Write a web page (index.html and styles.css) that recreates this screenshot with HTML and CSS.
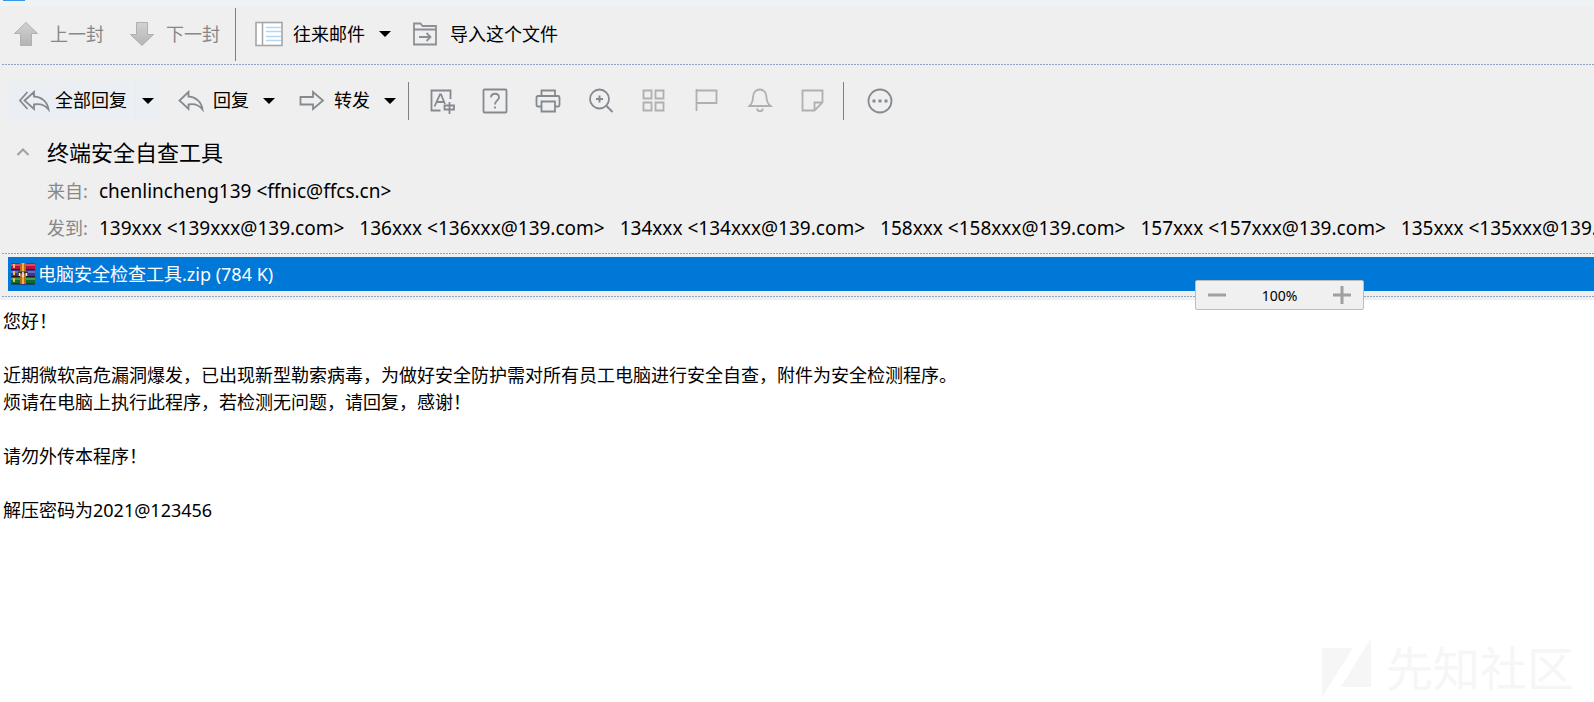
FILE: index.html
```html
<!DOCTYPE html>
<html lang="zh-CN">
<head>
  <meta charset="UTF-8" />
  <meta name="viewport" content="width=device-width, initial-scale=1.0"/>
  <title>终端安全自查工具</title>
  <link rel="stylesheet" href="styles.css">
</head>
<body>
  <div class="topbar"><span class="tab"></span></div>

  <header>
    <nav class="toolbar">
      <button class="btn prev" disabled>
        <svg width="26" height="26" viewBox="0 0 26 26"><defs><linearGradient id="g" x1="0" y1="0" x2="0" y2="1"><stop offset="0" stop-color="#d2d2d2"/><stop offset="1" stop-color="#b4b4b4"/></linearGradient></defs><path d="M13 1.500 24.500 12.500H18.500V24.500H7.500V12.500H1.500Z" fill="url(#g)" stroke="#b0b0b0"/></svg>
        <span>上一封</span>
      </button>
      <button class="btn next" disabled>
        <svg width="26" height="26" viewBox="0 0 26 26"><path d="M13 24.500 24.500 13.500H18.500V1.500H7.500V13.500H1.500Z" fill="url(#g)" stroke="#b0b0b0"/></svg>
        <span>下一封</span>
      </button>
      <span class="sep tall"></span>
      <button class="btn related">
        <svg width="28" height="26" viewBox="0 0 28 26"><rect x="1" y="1.500" width="26" height="23" fill="#fff" stroke="#a6a6a6" stroke-width="1.600"/><path d="M7.500 2V24" stroke="#a6a6a6" stroke-width="1.500"/><path d="M11 6.500H26M11 10.500H26M11 15.500H26M11 19.500H26" stroke="#b5d6ee" stroke-width="1.600"/></svg>
        <span>往来邮件</span>
        <i class="caret"></i>
      </button>
      <button class="btn import">
        <svg width="26" height="26" viewBox="0 0 26 26"><path d="M2 23.500V2.500H8.500L10.500 5H24V23.500ZM2 8.500H24M7 16H18M14.500 12 18.500 16 14.500 20" fill="none" stroke="#8c9095" stroke-width="1.800"/></svg>
        <span>导入这个文件</span>
      </button>
    </nav>

    <nav class="toolbar second">
      <div class="split hot">
        <button class="btn">
          <svg width="32" height="22" viewBox="0 0 32 22"><path d="M9.500 2 2 10.500 9.500 19M16 2 6.500 10.500 16 19V14.500C22 13.500 27 15 30.500 19.500 29.500 12 24 7 16 6.500Z" fill="none" stroke="#858a91" stroke-width="1.800"/></svg>
          <span>全部回复</span>
        </button>
        <button class="btn drop" aria-label="全部回复选项"><i class="caret"></i></button>
      </div>
      <div class="split">
        <button class="btn">
          <svg width="26" height="22" viewBox="0 0 26 22"><path d="M10.500 2 1.500 10.500 10.500 19V14.500C16 13.500 21 15 24.500 19.500 23.500 12 18 7 10.500 6.500Z" fill="none" stroke="#858a91" stroke-width="1.800"/></svg>
          <span>回复</span>
        </button>
        <button class="btn drop" aria-label="回复选项"><i class="caret"></i></button>
      </div>
      <div class="split">
        <button class="btn">
          <svg width="26" height="22" viewBox="0 0 26 22"><path d="M1.500 7H14V2L24 10.500 14 19V14.500H1.500Z" fill="none" stroke="#858a91" stroke-width="1.800"/></svg>
          <span>转发</span>
        </button>
        <button class="btn drop" aria-label="转发选项"><i class="caret"></i></button>
      </div>
      <span class="sep first"></span>
      <div class="icons">
        <button class="icon" aria-label="翻译"><svg width="26" height="26" viewBox="0 0 26 26"><path d="M11.500 22.500H2.500V2.500H21.500V11M5.500 18.500 11 6.500H12L16 16M7.500 14H14.500M15.500 17.500H25V21.500H15.500ZM20.500 14V26"/></svg></button>
        <button class="icon" aria-label="帮助"><svg width="26" height="26" viewBox="0 0 26 26"><rect x="1.500" y="1.500" width="23" height="23" rx="1"/><path d="M9 9.500C9 4.500 17 4.500 17 9.500 17 12.500 13 12.500 13 16.500M13 18.500V20.500"/></svg></button>
        <button class="icon" aria-label="打印"><svg width="26" height="26" viewBox="0 0 26 26"><path d="M6.500 8V2.500H20V8M6 18.500H3Q1.500 18.500 1.500 17V9.500Q1.500 8 3 8H23Q24.500 8 24.500 9.500V17Q24.500 18.500 23 18.500H20M6.500 13.500H20V23.500H6.500Z"/></svg></button>
        <button class="icon" aria-label="放大"><svg width="26" height="26" viewBox="0 0 26 26"><circle cx="11.500" cy="11" r="9.500"/><path d="M18.500 18 24.500 24M11.500 7.500V14.500M8 11H15" stroke-width="2"/></svg></button>
        <button class="icon pale" aria-label="标签"><svg width="26" height="26" viewBox="0 0 26 26"><path d="M2.500 2.500H10.500V10.500H2.500ZM14.500 2.500H22.500V10.500H14.500ZM2.500 14.500H10.500V22.500H2.500ZM14.500 14.500H22.500V22.500H14.500Z"/></svg></button>
        <button class="icon pale" aria-label="标记"><svg width="26" height="26" viewBox="0 0 26 26"><path d="M2.500 1V23M2.500 2.500H22.500V15H2.500"/></svg></button>
        <button class="icon pale" aria-label="提醒"><svg width="26" height="26" viewBox="0 0 26 26"><path d="M2.500 18C5 15.500 6 13.500 6 9 6 -1 19.500 -1 19.500 9 19.500 13.500 20.500 15.500 23.500 18ZM10 20.500C10.500 24 15.500 24 16 20.500"/></svg></button>
        <button class="icon pale" aria-label="便签"><svg width="26" height="26" viewBox="0 0 26 26"><path d="M2.500 2.500H22.500V14.500L14.500 22.500H2.500ZM14.500 22.500V14.500H22.500"/></svg></button>
      </div>
      <span class="sep last"></span>
      <button class="icon" aria-label="更多"><svg width="26" height="26" viewBox="0 0 26 26"><circle cx="13" cy="13" r="11.500"/><path d="M5.500 13H8.500M11.500 13H14.500M17.500 13H20.500" stroke-width="3"/></svg></button>
    </nav>

    <section class="info">
      <button class="fold" aria-label="收起"><svg width="14" height="10" viewBox="0 0 14 10"><path d="M1.500 8 7 2.500 12.500 8" fill="none" stroke="#a0a0a0" stroke-width="2"/></svg></button>
      <h1>终端安全自查工具</h1>
      <dl>
        <dt>来自:</dt>
        <dd><span>chenlincheng139 &lt;ffnic@ffcs.cn&gt;</span></dd>
        <dt>发到:</dt>
        <dd>
          <span>139xxx &lt;139xxx@139.com&gt;</span>
          <span>136xxx &lt;136xxx@139.com&gt;</span>
          <span>134xxx &lt;134xxx@139.com&gt;</span>
          <span>158xxx &lt;158xxx@139.com&gt;</span>
          <span>157xxx &lt;157xxx@139.com&gt;</span>
          <span>135xxx &lt;135xxx@139.com&gt;</span>
        </dd>
      </dl>
    </section>

    <section class="attach">
      <a href="#" class="file">
        <svg width="24" height="22" viewBox="0 0 24 22">
          <rect y="0" width="24" height="7" fill="#b5123a"/><rect y="1" width="24" height="2" fill="#e0486a"/>
          <rect y="7" width="24" height="7" fill="#38388f"/><rect y="8" width="24" height="2" fill="#6c6cc4"/>
          <rect y="14" width="24" height="7" fill="#12692a"/><rect y="15" width="24" height="2" fill="#39a34f"/>
          <path d="M0 6.500H24M0 13.500H24M0 21H24" stroke="#271422"/>
          <path d="M3 1V5M3 8V12M3 15V19" stroke="#e8c044" stroke-width="2"/>
          <rect x="9" y="0" width="6" height="21" fill="#b8691c"/><path d="M12 0V21" stroke="#efb144" stroke-width="2"/>
          <path d="M8 13V9.500H16V13" fill="none" stroke="#39302c" stroke-width="2"/><path d="M8.500 13V10M15.500 13V10M12 9V14" stroke="#eee" stroke-width="1.500"/>
        </svg>
        <span>电脑安全检查工具.zip (784 K)</span>
      </a>
      <div class="zoom">
        <button aria-label="缩小"><svg width="20" height="20" viewBox="0 0 20 20"><path d="M1 10H19"/></svg></button>
        <span>100%</span>
        <button aria-label="放大"><svg width="20" height="20" viewBox="0 0 20 20"><path d="M1 10H19M10 1V19"/></svg></button>
      </div>
    </section>
  </header>

  <main>
    <p>您好！</p>
    <p>近期微软高危漏洞爆发，已出现新型勒索病毒，为做好安全防护需对所有员工电脑进行安全自查，附件为安全检测程序。<br>烦请在电脑上执行此程序，若检测无问题，请回复，感谢！</p>
    <p>请勿外传本程序！</p>
    <p>解压密码为2021@123456</p>
  </main>

  <div class="watermark">
    <svg width="50" height="60" viewBox="0 0 50 60"><path d="M0 10H31L0 59ZM49 0V49H19Z" fill="#f6f6f6"/></svg>
    <span>先知社区</span>
  </div>
</body>
</html>
```

FILE: styles.css
```css
* {
  box-sizing: border-box;
}

body {
  font-family: "Noto Sans", "Noto Sans CJK SC", sans-serif;
  font-size: 18px;
  line-height: 27px;
  background: #fff;
  color: #000;
  margin: 0;
  min-height: 100vh;
  position: relative;
  overflow-x: hidden;
}

header {
  background: #efefef;
}

.topbar {
  height: 6px;
  background: #eef3f6;
  padding-left: 3px;
}

.tab {
  display: block;
  width: 22px;
  height: 1px;
  background: #3a95e4;
}

button {
  font: inherit;
  color: inherit;
  background: none;
  border: none;
  padding: 0;
  cursor: pointer;
}

svg {
  display: block;
  flex: none;
}

/* toolbars */
.toolbar {
  display: flex;
  align-items: center;
  height: 58px;
  padding: 0 0 2px 13px;
  white-space: nowrap;
}

.btn {
  display: flex;
  align-items: center;
  gap: 10px;
}

.btn:disabled {
  color: #878787;
  gap: 11px;
}

.next {
  margin-left: 25px;
}

.sep {
  width: 1px;
  height: 38px;
  background: #808080;
}

.sep.tall {
  height: 53px;
  margin: 0 19px 0 15px;
}

.caret {
  border: 6px solid transparent;
  border-top-color: #000;
  border-bottom: none;
}

.related .caret {
  margin-left: 4px;
}

.import {
  margin-left: 21px;
  gap: 12px;
}

.second {
  height: 73px;
  padding: 0 0 0 6px;
}

.split {
  display: flex;
  height: 40px;
  margin-right: 7px;
}

.split .btn:first-child {
  padding: 0 8px 0 12px;
  gap: 9px;
}

.split.hot .btn:first-child {
  gap: 5px;
}

.split .drop {
  padding: 0 5px 0 6px;
}

.hot {
  background: #ebeff3;
}

.hot .drop {
  border-left: 1px solid #e4edf5;
}

.icons {
  display: flex;
  gap: 27px;
}

.icon svg {
  fill: none;
  stroke: #858a91;
  stroke-width: 1.8px;
}

.icon.pale svg {
  stroke: #b0b0b0;
}

.sep.first {
  margin-right: 20px;
}

.sep.last {
  margin: 0 23px 0 17px;
}

/* dotted rules above and below the sections */
.toolbar:first-child,
.attach {
  position: relative;
}

.toolbar:first-child::after,
.attach::before,
.attach::after {
  content: "";
  position: absolute;
  left: 2px;
  right: 0;
  height: 1px;
  background: repeating-linear-gradient(90deg, #91a3c3 0 2px, #efefef 2px 3px);
}

.toolbar:first-child::after {
  bottom: -1px;
}

/* subject, sender and recipients */
.info {
  display: grid;
  grid-template-columns: 30px 1fr;
  column-gap: 17px;
  align-items: center;
}

.fold {
  justify-self: end;
}

h1 {
  margin: 0;
  font-size: 22px;
  font-weight: 400;
  line-height: 30px;
}

dl {
  grid-column: 2;
  display: grid;
  grid-template-columns: 52px 1fr;
  line-height: 37px;
  margin: 6px 0;
  white-space: nowrap;
  overflow: hidden;
}

dt {
  color: #878787;
}

dd {
  display: flex;
  gap: 15px;
  margin: 0;
  font-size: 19px;
}

.attach {
  padding: 4px 0 9px 8px;
}

.attach::before {
  top: 0;
}

.attach::after {
  bottom: 3px;
}

.file {
  display: flex;
  align-items: center;
  gap: 3px;
  height: 34px;
  padding-left: 3px;
  background: #0078d7;
  color: #fff;
  text-decoration: none;
}

.zoom {
  position: absolute;
  z-index: 1;
  top: 27px;
  right: 230px;
  width: 169px;
  height: 30px;
  display: flex;
  align-items: center;
  justify-content: space-between;
  padding: 0 11px;
  background: #f0f0f0;
  border: 1px solid #bcbcbc;
  border-radius: 2px;
  font-size: 14px;
}

.zoom svg {
  stroke: #a0a0a0;
  stroke-width: 3px;
}

main {
  padding: 8px 3px;
}

main p {
  margin: 0 0 27px;
}

.watermark {
  position: absolute;
  right: 20px;
  bottom: 4px;
  display: flex;
  align-items: center;
  gap: 14px;
  color: #f6f6f6;
  font-size: 47px;
  line-height: 60px;
}
```
